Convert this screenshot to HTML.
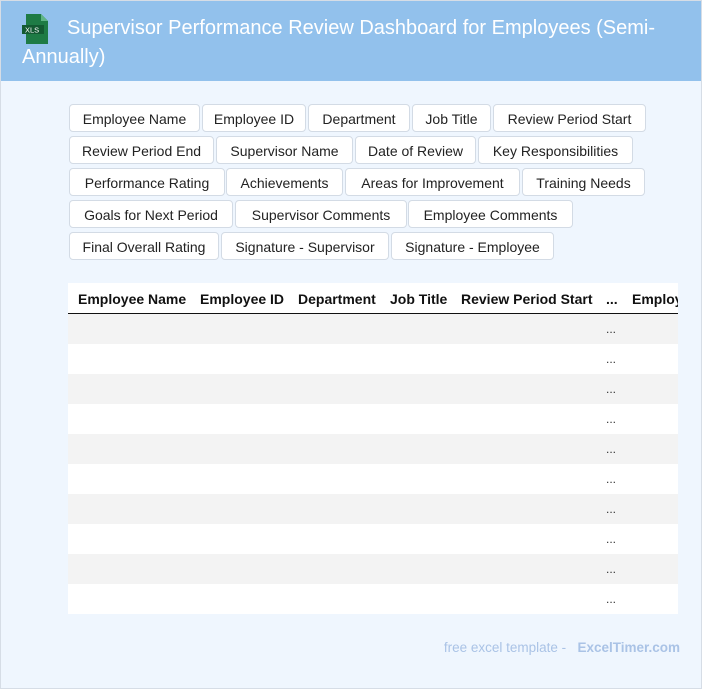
<!DOCTYPE html><html><head><style>
body{margin:0;width:702px;height:689px;background:#eff6fe;font-family:"Liberation Sans",Roboto,sans-serif;position:relative;overflow:hidden}
.frame{position:absolute;left:0;top:0;width:700px;height:687px;border:1px solid #d6dde6}
.hdr{position:absolute;left:1px;top:1px;width:700px;height:80px;background:#92c1ec}
.title{position:absolute;left:22px;top:14px;width:670px;color:#fff;font-size:20px;line-height:29px}
.ic{position:absolute;left:22px;top:14px;width:28px;height:30px}
.tag{position:absolute;height:26px;border:1px solid #d3dbe5;border-radius:4px;background:#fff;font-size:14px;line-height:28px;text-align:center;color:#222;box-sizing:content-box;white-space:nowrap}
.tbl{position:absolute;left:68px;top:283px;width:610px;height:331px;background:#fff;overflow:hidden}
.th{position:absolute;top:8px;font-weight:bold;font-size:14px;color:#111;white-space:nowrap}
.line{position:absolute;left:0;top:30px;width:610px;height:1.5px;background:#111}
.row{position:absolute;left:0;width:610px;height:30px}
.row span{position:absolute;left:538px;top:8px;font-size:12px;color:#333}
.foot{position:absolute;right:22px;top:640px;font-size:13.5px;color:#aac3e6}
</style></head><body>
<div class="frame"></div>
<div class="hdr"></div>
<svg class="ic" viewBox="0 0 28 30"><path d="M4 0h15l7 7v23H4z" fill="#1e7b45"/><path d="M19 0v7h7z" fill="#5fb585"/><rect x="0" y="11" width="22" height="9" fill="#135a32"/><text x="3" y="18.5" font-size="7.5" fill="#fff" font-family="Liberation Sans">XLS</text></svg>
<div class="title"><span style="margin-left:45px">Supervisor Performance Review Dashboard for Employees (Semi-</span><br>Annually)</div>
<div class="tag" style="left:69px;top:104px;width:129px">Employee Name</div>
<div class="tag" style="left:202px;top:104px;width:102px">Employee ID</div>
<div class="tag" style="left:308px;top:104px;width:100px">Department</div>
<div class="tag" style="left:412px;top:104px;width:77px">Job Title</div>
<div class="tag" style="left:493px;top:104px;width:151px">Review Period Start</div>
<div class="tag" style="left:69px;top:136px;width:143px">Review Period End</div>
<div class="tag" style="left:216px;top:136px;width:135px">Supervisor Name</div>
<div class="tag" style="left:355px;top:136px;width:119px">Date of Review</div>
<div class="tag" style="left:478px;top:136px;width:153px">Key Responsibilities</div>
<div class="tag" style="left:69px;top:168px;width:154px">Performance Rating</div>
<div class="tag" style="left:226px;top:168px;width:115px">Achievements</div>
<div class="tag" style="left:345px;top:168px;width:173px">Areas for Improvement</div>
<div class="tag" style="left:522px;top:168px;width:121px">Training Needs</div>
<div class="tag" style="left:69px;top:200px;width:162px">Goals for Next Period</div>
<div class="tag" style="left:235px;top:200px;width:170px">Supervisor Comments</div>
<div class="tag" style="left:408px;top:200px;width:163px">Employee Comments</div>
<div class="tag" style="left:69px;top:232px;width:148px">Final Overall Rating</div>
<div class="tag" style="left:221px;top:232px;width:166px">Signature - Supervisor</div>
<div class="tag" style="left:391px;top:232px;width:161px">Signature - Employee</div>
<div class="tbl">
<div class="th" style="left:10px">Employee Name</div>
<div class="th" style="left:132px">Employee ID</div>
<div class="th" style="left:230px">Department</div>
<div class="th" style="left:322px">Job Title</div>
<div class="th" style="left:393px">Review Period Start</div>
<div class="th" style="left:538px">...</div>
<div class="th" style="left:564px">Employee Comments</div>
<div class="line"></div>
<div class="row" style="top:31px;background:#f3f3f3"><span>...</span></div>
<div class="row" style="top:61px"><span>...</span></div>
<div class="row" style="top:91px;background:#f3f3f3"><span>...</span></div>
<div class="row" style="top:121px"><span>...</span></div>
<div class="row" style="top:151px;background:#f3f3f3"><span>...</span></div>
<div class="row" style="top:181px"><span>...</span></div>
<div class="row" style="top:211px;background:#f3f3f3"><span>...</span></div>
<div class="row" style="top:241px"><span>...</span></div>
<div class="row" style="top:271px;background:#f3f3f3"><span>...</span></div>
<div class="row" style="top:301px"><span>...</span></div>
</div>
<div class="foot">free excel template - &nbsp; <b>ExcelTimer.com</b></div>
</body></html>
